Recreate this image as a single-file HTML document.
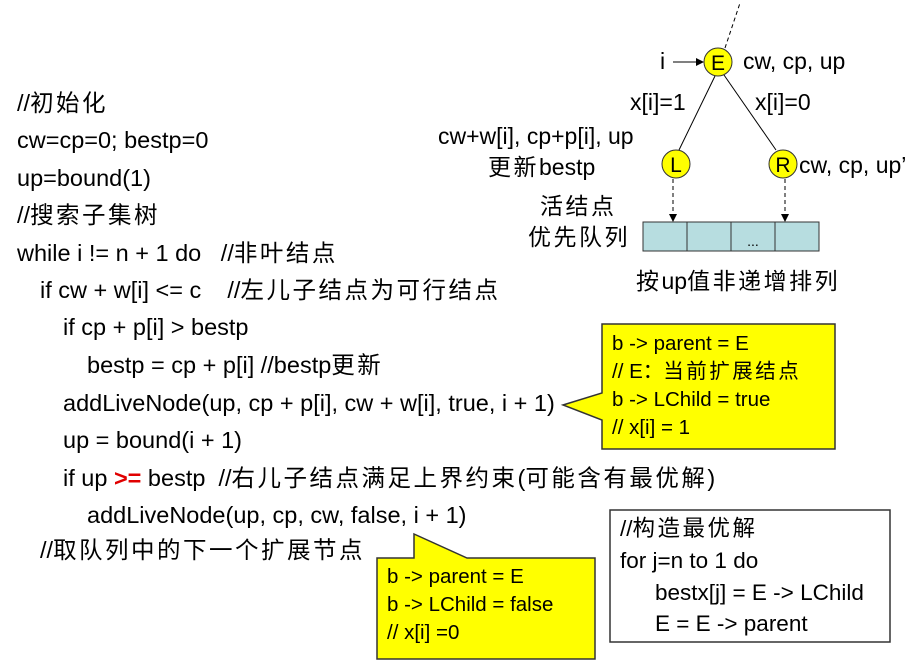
<!DOCTYPE html>
<html><head><meta charset="utf-8"><style>
body{margin:0;width:911px;height:669px;background:#fff;position:relative;overflow:hidden;font-family:"Liberation Sans","Noto Sans CJK SC",sans-serif;color:#000}
.t{position:absolute;white-space:nowrap;font-size:23.5px;line-height:24px}
.m{font-size:23px}
.s{font-size:20.5px;line-height:22px}
.b{font-size:22.5px}
.c{letter-spacing:2.5px}
svg{position:absolute;left:0;top:0}
</style></head><body>
<svg width="911" height="669">
<polygon points="602,324 835,324 835,449 602,449 602,420 563,405 602,393" fill="#ffff00" stroke="#333" stroke-width="1.5"/>
<polygon points="377,558 414,558 414,534 467,558 595,558 595,659 377,659" fill="#ffff00" stroke="#333" stroke-width="1.5"/>
<rect x="610" y="510" width="280" height="132" fill="#fff" stroke="#333" stroke-width="1.5"/>
<line x1="725" y1="48" x2="740" y2="3" stroke="#000" stroke-dasharray="4,3"/>
<line x1="673" y1="62" x2="700" y2="62" stroke="#000"/><polygon points="704,62 696,58 696,66"/>
<line x1="715" y1="76" x2="679" y2="150" stroke="#000"/>
<line x1="724" y1="75" x2="776" y2="150" stroke="#000"/>
<line x1="673" y1="179" x2="673" y2="216" stroke="#000" stroke-dasharray="4,3"/><polygon points="673,222 669,214 677,214"/>
<line x1="785" y1="179" x2="785" y2="216" stroke="#000" stroke-dasharray="4,3"/><polygon points="785,222 781,214 789,214"/>
<circle cx="718" cy="62" r="14" fill="#ffff00" stroke="#333"/>
<circle cx="676" cy="164" r="14" fill="#ffff00" stroke="#333"/>
<circle cx="783" cy="164" r="14" fill="#ffff00" stroke="#333"/>
<rect x="643" y="222" width="176" height="29" fill="#b7dde0" stroke="#333"/>
<line x1="687" y1="222" x2="687" y2="251" stroke="#333"/><line x1="731" y1="222" x2="731" y2="251" stroke="#333"/><line x1="775" y1="222" x2="775" y2="251" stroke="#333"/>
<text x="753" y="246" font-size="14" text-anchor="middle" font-family="Liberation Sans">...</text>
<text x="718" y="70" font-size="21" text-anchor="middle" font-family="Liberation Sans">E</text>
<text x="676" y="172" font-size="21" text-anchor="middle" font-family="Liberation Sans">L</text>
<text x="783" y="172" font-size="21" text-anchor="middle" font-family="Liberation Sans">R</text>
</svg>
<div class="t m" style="left:660px;top:49px">i</div>
<div class="t m" style="left:743px;top:49px">cw, cp, up</div>
<div class="t m" style="left:630px;top:90px">x[i]=1</div>
<div class="t m" style="left:755px;top:90px">x[i]=0</div>
<div class="t m" style="left:438px;top:124px">cw+w[i], cp+p[i], up</div>
<div class="t m" style="left:488px;top:155px"><span class="c">更新</span>bestp</div>
<div class="t m" style="left:799px;top:153px">cw, cp, up’</div>
<div class="t m c" style="left:540px;top:194px">活结点</div>
<div class="t m c" style="left:528px;top:225px">优先队列</div>
<div class="t m" style="left:636px;top:269px"><span class="c">按</span>up<span class="c">值非递增排列</span></div>

<div class="t" style="left:17px;top:91px">//<span class="c">初始化</span></div>
<div class="t" style="left:17px;top:128px">cw=cp=0; bestp=0</div>
<div class="t" style="left:17px;top:166px">up=bound(1)</div>
<div class="t" style="left:17px;top:203px">//<span class="c">搜索子集树</span></div>
<div class="t" style="left:17px;top:241px">while i != n + 1 do &nbsp;&nbsp;//<span class="c">非叶结点</span></div>
<div class="t" style="left:40px;top:278px">if cw + w[i] &lt;= c &nbsp;&nbsp;&nbsp;//<span class="c">左儿子结点为可行结点</span></div>
<div class="t" style="left:63px;top:315px">if cp + p[i] &gt; bestp</div>
<div class="t" style="left:87px;top:353px">bestp = cp + p[i] //bestp<span class="c">更新</span></div>
<div class="t" style="left:63px;top:391px">addLiveNode(up, cp + p[i], cw + w[i], true, i + 1)</div>
<div class="t" style="left:63px;top:428px">up = bound(i + 1)</div>
<div class="t" style="left:63px;top:466px">if up <b style="color:#e00000">&gt;=</b> bestp &nbsp;//<span class="c">右儿子结点满足上界约束</span>(<span class="c">可能含有最优解</span>)</div>
<div class="t" style="left:87px;top:503px">addLiveNode(up, cp, cw, false, i + 1)</div>
<div class="t" style="left:40px;top:538px">//<span class="c">取队列中的下一个扩展节点</span></div>

<div class="t s" style="left:612px;top:333px">b -&gt; parent = E</div>
<div class="t s" style="left:612px;top:361px">// E：<span class="c">当前扩展结点</span></div>
<div class="t s" style="left:612px;top:389px">b -&gt; LChild = true</div>
<div class="t s" style="left:612px;top:417px">// x[i] = 1</div>

<div class="t s" style="left:387px;top:566px">b -&gt; parent = E</div>
<div class="t s" style="left:387px;top:594px">b -&gt; LChild = false</div>
<div class="t s" style="left:387px;top:622px">// x[i] =0</div>

<div class="t b" style="left:620px;top:517px">//<span class="c">构造最优解</span></div>
<div class="t b" style="left:620px;top:549px">for j=n to 1 do</div>
<div class="t b" style="left:655px;top:581px">bestx[j] = E -&gt; LChild</div>
<div class="t b" style="left:655px;top:612px">E = E -&gt; parent</div>
</body></html>
